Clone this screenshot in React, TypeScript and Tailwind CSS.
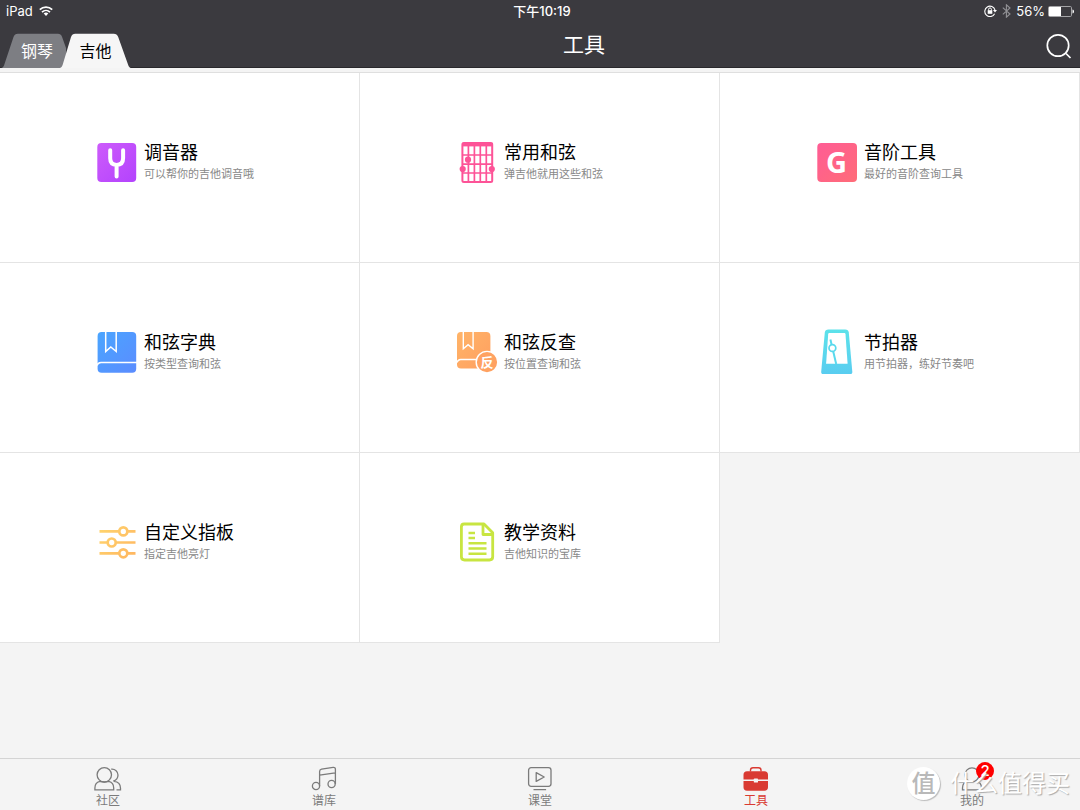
import React from 'react';

const white = '#ffffff';

function TunerIcon() {
  return (
    <svg className="size-[50px] shrink-0" viewBox="0 0 50 50" fill="none" aria-hidden="true">
      <defs>
        <linearGradient id="tuner" x1="0" y1="0" x2="1" y2="1">
          <stop offset="0" stopColor="#cd5bfb" />
          <stop offset="1" stopColor="#b343fd" />
        </linearGradient>
      </defs>
      <rect x="7.3" y="6" width="38.9" height="39" rx="4" fill="url(#tuner)" />
      <path d="M20.2 13.3v8c0 4.4 2.5 6.6 6.4 6.6s6.5-2.2 6.5-6.6v-8M26.6 28v11.5" stroke={white} strokeWidth="4" strokeLinecap="round" />
    </svg>
  );
}

function ChordsIcon() {
  return (
    <svg className="size-[50px] shrink-0" viewBox="0 0 50 50" fill="none" stroke="#fd5397" aria-hidden="true">
      <rect x="12.4" y="6" width="29.8" height="39" rx="1.5" strokeWidth="2" />
      <path d="M12 7.6h31" strokeWidth="3.6" />
      <path d="M18.4 8v37M24.4 8v37M30.3 8v37M36.3 8v37M12 18h30M12 27.2h30M12 36h30" strokeWidth="1.7" />
      <g fill="#fd5397" stroke="none">
        <circle cx="18" cy="22.7" r="3.1" />
        <circle cx="12.7" cy="32" r="3.1" />
        <circle cx="41.8" cy="32" r="3.1" />
      </g>
    </svg>
  );
}

function ScaleIcon() {
  return (
    <svg className="size-[50px] shrink-0" viewBox="0 0 50 50" aria-hidden="true">
      <defs>
        <linearGradient id="scale" x1="0" y1="0" x2="1" y2="1">
          <stop offset="0" stopColor="#ff5c95" />
          <stop offset="1" stopColor="#ff6c78" />
        </linearGradient>
      </defs>
      <rect x="7.3" y="6" width="39.7" height="39" rx="4" fill="url(#scale)" />
      <text x="26.5" y="36" textAnchor="middle" fontFamily="Open Sans, sans-serif" fontWeight="700" fontSize="29" fill={white}>G</text>
    </svg>
  );
}

function DictionaryIcon() {
  return (
    <svg className="size-[50px] shrink-0" viewBox="0 0 50 50" fill="none" aria-hidden="true">
      <defs>
        <linearGradient id="dictionary" x1="0" y1="0" x2="1" y2="1">
          <stop offset="0" stopColor="#4aa5ff" />
          <stop offset="1" stopColor="#5b8cff" />
        </linearGradient>
      </defs>
      <rect x="7.6" y="5" width="38.6" height="40.7" rx="4" fill="url(#dictionary)" />
      <path d="M7 38.5c.6-2.2 2-3.1 4-3.1h36" stroke={white} strokeWidth="1.5" />
      <path d="M15.7 4v20.5l5.1-4.6 5.4 4.6V4" stroke={white} strokeWidth="1.5" />
    </svg>
  );
}

function ReverseIcon() {
  return (
    <svg className="size-[50px] shrink-0" viewBox="0 0 50 50" fill="none" aria-hidden="true">
      <defs>
        <linearGradient id="reverse" x1="0" y1="0" x2="1" y2="1">
          <stop offset="0" stopColor="#ffb468" />
          <stop offset="1" stopColor="#ff9f60" />
        </linearGradient>
      </defs>
      <rect x="7" y="5" width="33.4" height="36.5" rx="4" fill="url(#reverse)" />
      <path d="M7 35.5c.6-2 1.8-3 3.6-3h30" stroke={white} strokeWidth="1.4" />
      <path d="M13.3 4v17.8l4.8-4.2 5 4.2V4" stroke={white} strokeWidth="1.4" />
      <circle cx="37" cy="35.2" r="10.8" fill="#ffa261" stroke={white} strokeWidth="1.4" />
      <text x="37" y="40" textAnchor="middle" fontFamily="Noto Sans CJK SC, sans-serif" fontWeight="700" fontSize="13" fill={white}>反</text>
    </svg>
  );
}

function MetronomeIcon() {
  return (
    <svg className="size-[50px] shrink-0" viewBox="0 0 50 50" fill="none" aria-hidden="true">
      <defs>
        <linearGradient id="metronome" x1="0" y1="0" x2="0" y2="1">
          <stop offset="0" stopColor="#5ce2ea" />
          <stop offset="1" stopColor="#59cdf0" />
        </linearGradient>
      </defs>
      <path d="M18.5 2.5h16.7c2.2 0 3.4 1 3.6 3l3.5 39.2c.1 1.6-.5 2.3-2 2.3H13.2c-1.5 0-2.1-.7-2-2.3l3.6-39.2c.2-2 1.4-3 3.7-3Z" fill="url(#metronome)" />
      <path d="M19.5 6h14.7c.8 0 1.2.4 1.3 1.2L37.6 36.700H16.1L18.2 7.200c.1-.8.5-1.2 1.3-1.2Z" fill={white} />
      <path d="M20.4 12.5 26.2 37" stroke="#59d9ed" strokeWidth="2" />
      <circle cx="22.4" cy="21" r="3.4" fill={white} stroke="#59d9ed" strokeWidth="1.7" />
    </svg>
  );
}

function FretboardIcon() {
  return (
    <svg className="size-[50px] shrink-0" viewBox="0 0 50 50" fill="none" strokeWidth="2.7" aria-hidden="true">
      <defs>
        <linearGradient id="fretboard" gradientUnits="userSpaceOnUse" x1="9" y1="10" x2="46" y2="40">
          <stop offset="0" stopColor="#ffd56e" />
          <stop offset="1" stopColor="#ffb55f" />
        </linearGradient>
      </defs>
      <g stroke="url(#fretboard)">
        <path d="M9.5 14.4h20M37 14.4h8.5M9.5 25.5h8.5M25.5 25.5h20M9.5 36.3h20M37 36.3h8.5" />
        <circle cx="33.3" cy="14.4" r="4" />
        <circle cx="21.7" cy="25.5" r="4" />
        <circle cx="33.3" cy="36.3" r="4" />
      </g>
    </svg>
  );
}

function MaterialIcon() {
  return (
    <svg className="size-[50px] shrink-0" viewBox="0 0 50 50" fill="none" stroke="#c8e541" strokeWidth="2.8" strokeLinejoin="round" aria-hidden="true">
      <path d="M14 7h20l8.7 8.8v24c0 2.2-1 3.2-3.2 3.2H14.6c-2.2 0-3.2-1-3.2-3.2V10c0-2 .8-3 2.6-3Z" />
      <path d="M33 7.500v10h9.500" />
      <path d="M18.5 16h6.500M18.500 21h6.500M18.500 26.300h18M18.500 31.500h18M18.500 36.700h18" strokeWidth="2.4" />
    </svg>
  );
}

const tools = [
  { title: '调音器', note: '可以帮你的吉他调音哦', Icon: TunerIcon },
  { title: '常用和弦', note: '弹吉他就用这些和弦', Icon: ChordsIcon },
  { title: '音阶工具', note: '最好的音阶查询工具', Icon: ScaleIcon },
  { title: '和弦字典', note: '按类型查询和弦', Icon: DictionaryIcon },
  { title: '和弦反查', note: '按位置查询和弦', Icon: ReverseIcon },
  { title: '节拍器', note: '用节拍器，练好节奏吧', Icon: MetronomeIcon },
  { title: '自定义指板', note: '指定吉他亮灯', Icon: FretboardIcon },
  { title: '教学资料', note: '吉他知识的宝库', Icon: MaterialIcon },
];

const navItems = [
  {
    label: '社区',
    icon: (
      <>
        <circle cx="10.3" cy="8.8" r="7.2" />
        <path d="M5.8 15.3C2.5 16 .9 18.8 .9 22v1.8h18.8V22c0-3.2-1.7-6-4.9-6.7-2.9 1-6.1 1-9 0Z" />
        <path d="M17.2 3.2c4-.4 6.8 2.4 6.8 5.9 0 3-1.8 5.2-4.8 6.1M20 15.4c4.2.4 6.5 3 6.5 6.8v1.6h-4" />
      </>
    ),
  },
  {
    label: '谱库',
    icon: (
      <>
        <circle cx="6" cy="20" r="3.6" />
        <circle cx="21.6" cy="18" r="3.6" />
        <path d="M9.6 20V5.6c0-1.5.6-2.2 2-2.5l11.5-1.7c1.5-.2 2.3.4 2.3 1.9V18M9.6 9.2l15.6-2.4" />
      </>
    ),
  },
  {
    label: '课堂',
    icon: (
      <>
        <rect x="2.6" y="1.7" width="22.4" height="18.6" rx="2.5" />
        <path d="M10.2 6.6v8.8l8-4.4-8-4.4ZM7.5 23.7h12.6" strokeLinejoin="round" />
      </>
    ),
  },
  {
    label: '工具',
    active: true,
    icon: (
      <>
        <path d="M8.5 5.5V4.2c0-1.8.7-2.5 2.5-2.5h5.5c1.8 0 2.5.7 2.5 2.5v1.3" strokeWidth="1.4" />
        <path d="M5 5.2h17.5c2.2 0 3.5 1.3 3.5 3.5v4.8H1.5V8.7c0-2.2 1.3-3.5 3.5-3.5ZM1.5 14.9H26v6.4c0 2.2-1.3 3.5-3.5 3.5H5c-2.2 0-3.5-1.3-3.5-3.5v-6.4Z" fill="currentColor" stroke="none" />
        <rect x="11.8" y="12.6" width="4.2" height="4" rx=".7" fill="#f4f4f4" stroke="none" />
      </>
    ),
  },
  {
    label: '我的',
    badge: '2',
    icon: (
      <>
        <circle cx="14" cy="8.8" r="7" />
        <path d="M9.3 15.3C6 16 4.5 18.8 4.5 22v1.8h19V22c0-3.2-1.6-6-4.8-6.7" />
      </>
    ),
  },
];

function StatusBar() {
  return (
    <div className="grid h-[22px] grid-cols-3 items-center px-[6px] text-[13px] leading-[22px]">
      <div className="flex items-center gap-[6px]">
        <span>iPad</span>
        <svg className="h-[10px] w-[14px]" viewBox="0 0 14 10" fill="none" stroke="currentColor" strokeWidth="1.7" aria-hidden="true">
          <path d="M.8 3.7c3.5-3.5 8.900-3.5 12.4 0M3 6.2c2.3-2.3 5.7-2.3 8 0" />
          <path d="m7 10 2.3-2.5C8 6.3 6 6.3 4.7 7.5L7 10Z" fill="currentColor" stroke="none" />
        </svg>
      </div>
      <div className="pl-[4px] text-center font-medium">下午10:19</div>
      <div className="flex items-center justify-end gap-[3px]">
        <svg className="mr-[2px] h-[12px] w-[13px]" viewBox="0 0 13 12" fill="none" stroke="currentColor" aria-hidden="true">
          <path d="M10.6 8.8A5.2 5.2 0 1 1 11 5" strokeWidth="1.1" />
          <path d="M9 5h4l-2 2.6L9 5Z" fill="currentColor" stroke="none" />
          <rect x="3.7" y="5.2" width="4.6" height="3.6" fill="currentColor" stroke="none" />
          <path d="M4.6 5.5V4.3a1.4 1.4 0 0 1 2.8 0v1.2" />
        </svg>
        <svg className="h-[14px] w-[9px] text-[#929296]" viewBox="0 0 9 14" fill="none" stroke="currentColor" strokeWidth="1.1" aria-hidden="true">
          <path d="m.8 3.7 7.2 6.3-3.6 3.2V.8L8 4 .8 10.3" />
        </svg>
        <span className="pl-[2px]">56%</span>
        <svg className="h-[11px] w-[26px]" viewBox="0 0 26 11" fill="none" aria-hidden="true">
          <rect x=".5" y=".5" width="23" height="10" rx="1.2" stroke="#a4a4a7" />
          <rect x="1" y="1" width="12" height="9" fill="currentColor" />
          <path d="M24.5 3.5c2 .3 2 3.7 0 4Z" fill="currentColor" />
        </svg>
      </div>
    </div>
  );
}

export default function App() {
  return (
    <div className="relative flex min-h-screen flex-col bg-[#f4f4f4] font-['Inter','Noto_Sans_CJK_SC',sans-serif] text-black">
      <header className="border-b border-[#29282c] bg-[#3b3a3f] text-white">
        <StatusBar />
        <div className="flex h-[45px]">
          <div className="-mb-px flex w-[131px] items-end" role="tablist">
            <button type="button" role="tab" aria-selected="false" className="relative h-[35px] w-[66px] text-[16px] leading-[36px]">
              <svg className="absolute inset-0 h-full w-full" viewBox="0 0 66 35" aria-hidden="true">
                <path d="M1 35c1.5-.3 2.3-1 3-2.500L13.500 4C14.500 1.500 15.500.8 18 .8h40c2 0 3.100.7 4 3L66 15v20H1Z" fill="#7d7e83" />
              </svg>
              <span className="relative pl-[8px]">钢琴</span>
            </button>
            <button type="button" role="tab" aria-selected="true" className="relative -ml-[6px] h-[35px] w-[71px] text-[16px] leading-[36px] text-black">
              <svg className="absolute inset-0 h-full w-full" viewBox="0 0 71 35" aria-hidden="true">
                <path d="M0 35c1.300-.5 2-1.300 2.600-3L11 4C12 1.500 13 .8 15.300.8h38.400c2.300 0 3.500.7 4.500 3.200l10 28c.6 1.700 1.500 2.700 2.800 3H0Z" fill="#f6f6f6" />
              </svg>
              <span className="relative">吉他</span>
            </button>
          </div>
          <h1 className="flex-1 text-center text-[21px] leading-[45px]">工具</h1>
          <button type="button" aria-label="搜索" className="flex w-[43px] items-center justify-center pt-[3px]">
            <svg className="size-[26px]" viewBox="0 0 26 26" fill="none" stroke="currentColor" strokeWidth="1.7" aria-hidden="true">
              <circle cx="12" cy="12.5" r="10.7" />
              <path d="m20 20.500 4.500 4.500" />
            </svg>
          </button>
        </div>
      </header>

      <main className="flex-1 pt-[4px]">
        <div className="grid grid-cols-3 border-t border-[#dfdfdf]">
          {tools.map(({ title, note, Icon }) => (
            <a key={title} href="#" className="flex h-[190px] items-center gap-[4px] border-r border-b border-[#e4e4e4] bg-white pb-[11px] pl-[25%]">
              <Icon />
              <div>
                <h2 className="text-[18px] leading-[24px]">{title}</h2>
                <p className="text-[11px] leading-[18px] text-[#888888]">{note}</p>
              </div>
            </a>
          ))}
        </div>
      </main>

      <nav className="grid h-[52px] grid-cols-5 border-t border-[#d4d4d4] text-[#7b7b7b]">
        {navItems.map((item) => (
          <a key={item.label} href="#" className={item.active ? 'flex flex-col items-center pt-[7px] text-[#d93a32]' : 'flex flex-col items-center pt-[7px]'}>
            <span className="relative">
              <svg className="h-[26px] w-[28px]" viewBox="0 0 28 26" fill="none" stroke="currentColor" strokeWidth="1.3" aria-hidden="true">
                {item.icon}
              </svg>
              {item.badge && (
                <span className="absolute -top-[4px] left-[18px] size-[18px] rounded-full bg-[#ff0000] text-center text-[15px] leading-[18px] font-medium text-white">{item.badge}</span>
              )}
            </span>
            <span className="text-[12px] leading-[18px]">{item.label}</span>
          </a>
        ))}
      </nav>

      <div className="pointer-events-none absolute right-[10px] bottom-[10px] flex items-center gap-[10px]">
        <span className="size-[33px] rounded-full bg-white text-center text-[24px] leading-[33px] font-medium text-[#b9b9b9] shadow-[1px_1px_1px_#bbbbbb]">值</span>
        <span className="text-[24px] leading-[33px] text-white [text-shadow:1px_1px_1px_#aaaaaa]">什么值得买</span>
      </div>
    </div>
  );
}
